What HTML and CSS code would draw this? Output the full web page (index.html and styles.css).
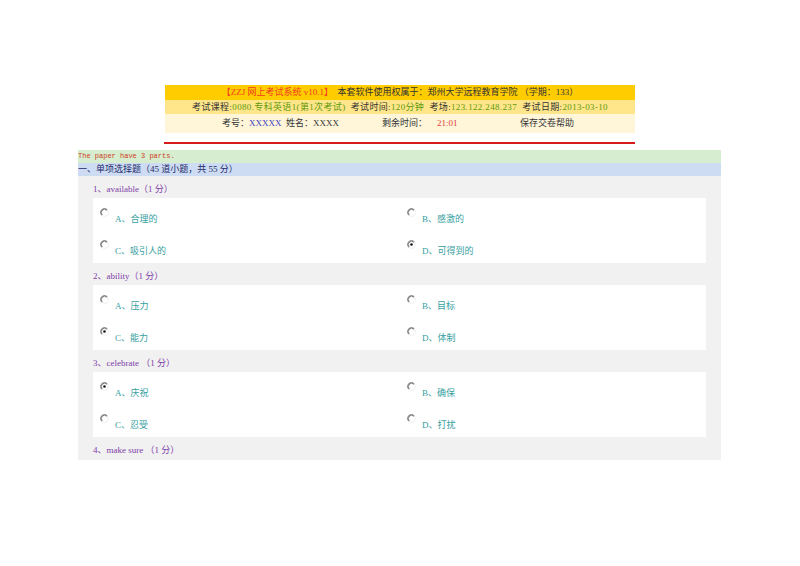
FILE: index.html
```html
<!DOCTYPE html>
<html lang="zh-CN">
<head>
<meta charset="utf-8">
<title>ZZJ 网上考试系统</title>
<link rel="stylesheet" href="styles.css">
</head>
<body>
<svg class="defs" width="0" height="0">
  <defs>
    <symbol id="radio" viewBox="0 0 12 12">
      <circle cx="6" cy="6" r="5.3" fill="#fff" stroke="#e4e4e4" stroke-width="0.8"/>
      <path d="M9.8 2.2 A5.3 5.3 0 0 0 2.2 9.8" fill="none" stroke="#7a7a7a" stroke-width="1.1"/>
      <path d="M9 3 A4.2 4.2 0 0 0 3 9" fill="none" stroke="#3c3c3c" stroke-width="0.9"/>
    </symbol>
    <symbol id="radio-on" viewBox="0 0 12 12">
      <circle cx="6" cy="6" r="5.3" fill="#fff" stroke="#e4e4e4" stroke-width="0.8"/>
      <path d="M9.8 2.2 A5.3 5.3 0 0 0 2.2 9.8" fill="none" stroke="#7a7a7a" stroke-width="1.1"/>
      <path d="M9 3 A4.2 4.2 0 0 0 3 9" fill="none" stroke="#3c3c3c" stroke-width="0.9"/>
      <circle cx="6" cy="6" r="1.7" fill="#111"/>
    </symbol>
  </defs>
</svg>

<div class="header">
  <div class="hrow hrow1"><span class="red">【ZZJ 网上考试系统 v10.1】</span>&nbsp;&nbsp;本套软件使用权属于：郑州大学远程教育学院 （学期：133）</div>
  <div class="hrow hrow2">考试课程:<span class="green">0080.专科英语1(第1次考试)</span>&nbsp;&nbsp;考试时间:<span class="green">120分钟</span>&nbsp;&nbsp;考场:<span class="green">123.122.248.237</span>&nbsp;&nbsp;考试日期:<span class="green">2013-03-10</span></div>
  <div class="hrow hrow3">
    <div class="cell c1">考号：<span class="blue">XXXXX</span>&nbsp;&nbsp;姓名：XXXX</div>
    <div class="cell c2">剩余时间：<span class="time">21:01</span></div>
    <div class="cell c3">保存交卷帮助</div>
  </div>
</div>
<div class="redline"></div>

<div class="paper">
  <div class="bar-green">The paper have 3 parts.</div>
  <div class="bar-blue">一、单项选择题（45 道小题，共 55 分）</div>
  <div class="questions">
    <div class="qtitle">1、available（1 分）</div>
    <div class="opts">
      <div class="opt"><svg class="radio"><use href="#radio"/></svg><span class="lbl">A、合理的</span></div>
      <div class="opt"><svg class="radio"><use href="#radio"/></svg><span class="lbl">B、感激的</span></div>
      <div class="opt"><svg class="radio"><use href="#radio"/></svg><span class="lbl">C、吸引人的</span></div>
      <div class="opt"><svg class="radio"><use href="#radio-on"/></svg><span class="lbl">D、可得到的</span></div>
    </div>
    <div class="qtitle">2、ability（1 分）</div>
    <div class="opts">
      <div class="opt"><svg class="radio"><use href="#radio"/></svg><span class="lbl">A、压力</span></div>
      <div class="opt"><svg class="radio"><use href="#radio"/></svg><span class="lbl">B、目标</span></div>
      <div class="opt"><svg class="radio"><use href="#radio-on"/></svg><span class="lbl">C、能力</span></div>
      <div class="opt"><svg class="radio"><use href="#radio"/></svg><span class="lbl">D、体制</span></div>
    </div>
    <div class="qtitle">3、celebrate （1 分）</div>
    <div class="opts">
      <div class="opt"><svg class="radio"><use href="#radio-on"/></svg><span class="lbl">A、庆祝</span></div>
      <div class="opt"><svg class="radio"><use href="#radio"/></svg><span class="lbl">B、确保</span></div>
      <div class="opt"><svg class="radio"><use href="#radio"/></svg><span class="lbl">C、忍受</span></div>
      <div class="opt"><svg class="radio"><use href="#radio"/></svg><span class="lbl">D、打扰</span></div>
    </div>
    <div class="qtitle">4、make sure （1 分）</div>
  </div>
</div>
</body>
</html>
```
FILE: styles.css
```css
html, body {
  margin: 0;
  padding: 0;
  background: #fff;
}
body {
  font-family: "Liberation Serif", "Noto Sans CJK SC", serif;
  font-size: 9px;
  color: #333;
}
.defs {
  position: absolute;
  width: 0;
  height: 0;
  overflow: hidden;
}
.header {
  margin: 85px 0 0 165px;
  width: 470px;
}
.hrow {
  text-align: center;
  white-space: nowrap;
}
.hrow1 {
  background: #ffcc00;
  height: 15px;
  line-height: 15px;
  color: #333;
}
.hrow2 {
  background: #ffe68a;
  height: 14px;
  line-height: 14px;
  letter-spacing: 0.35px;
}
.hrow3 {
  background: #fff6da;
  height: 19px;
  line-height: 19px;
  display: grid;
  grid-template-columns: 217px 138px 1fr;
  text-align: left;
}
.c1 {
  padding-left: 57px;
}
.red {
  color: #f03c1e;
}
.green {
  color: #5e9a0a;
}
.blue {
  color: #4040c0;
}
.time {
  color: #e03a3a;
  margin-left: 10px;
}
.redline {
  margin: 9px 0 0 164px;
  width: 471px;
  height: 2px;
  background: #d81c1c;
}
.paper {
  margin: 6px 0 0 78px;
  width: 643px;
}
.bar-green {
  background: #d6edcf;
  height: 13px;
  line-height: 13px;
  color: #d0401c;
  font-family: "Liberation Mono", "Noto Sans CJK SC", monospace;
  font-size: 7px;
}
.bar-blue {
  background: #cddcf2;
  height: 13px;
  line-height: 13px;
  color: #1c2a6a;
}
.questions {
  background: #f1f1f1;
  padding-bottom: 1px;
}
.qtitle {
  height: 22px;
  box-sizing: border-box;
  padding: 4px 0 0 15px;
  line-height: 18px;
  color: #8040a8;
}
.opts {
  margin: 0 15px;
  background: #fff;
  height: 65px;
  display: grid;
  grid-template-columns: 307px 1fr;
  grid-template-rows: 32px 33px;
}
.opt {
  display: flex;
  align-items: flex-start;
  padding: 10px 0 0 7px;
}
.radio {
  width: 9px;
  height: 9px;
  flex: none;
}
.lbl {
  color: #35a0a0;
  margin: 5px 0 0 6px;
  line-height: 12px;
}
```
